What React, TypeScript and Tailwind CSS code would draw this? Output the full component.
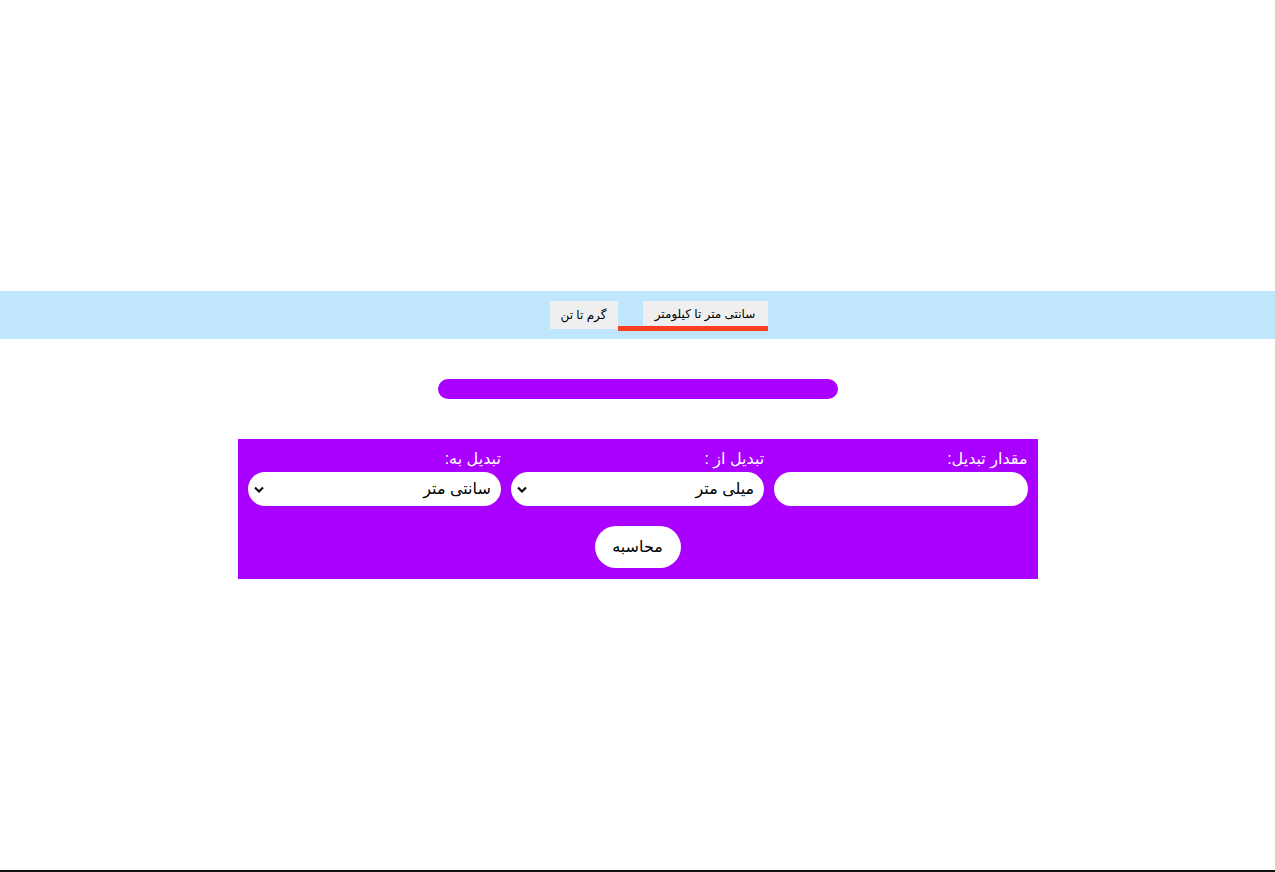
const font = { fontFamily: '"Liberation Sans", "DejaVu Sans", sans-serif' };

const Chevron = () => (
  <svg width="10" height="7" viewBox="0 0 10 7" className="shrink-0">
    <path d="M1 1.5 L5 5.5 L9 1.5" fill="none" stroke="#111" strokeWidth="2.2" />
  </svg>
);

const FakeSelect = ({ value }: { value: string }) => (
  <div className="flex h-[34px] items-center justify-between rounded-full bg-white pl-[6px] pr-[10px] text-[16px] text-black">
    <span>{value}</span>
    <Chevron />
  </div>
);

export default function App() {
  return (
    <div className="flex min-h-[872px] flex-col bg-white" style={font}>
      <div className="h-[291px]" />

      <nav className="flex h-[48px] items-start justify-center bg-[#bfe6fd] pt-[10px]" dir="rtl">
        <div className="flex border-b-[5px] border-[#ff3d1f] pl-[25px]">
          <button className="h-[25px] w-[125px] bg-[#efefef] text-[12px] text-black">سانتی متر تا کیلومتر</button>
        </div>
        <button className="ml-[42px] h-[28px] w-[68px] bg-[#efefef] text-[12px] text-black">گرم تا تن</button>
      </nav>

      <div className="mt-[40px] flex justify-center">
        <div className="h-[20px] w-[400px] rounded-full bg-[#aa00ff]" />
      </div>

      <div className="mt-[40px] flex justify-center">
        <form dir="rtl" className="w-[800px] bg-[#aa00ff] px-[10px] pb-[11px] pt-[10px]">
          <div className="grid grid-cols-3 gap-x-[10px]">
            <div>
              <label className="mb-[3px] block text-[16px] leading-[20px] text-white">مقدار تبدیل:</label>
              <div className="h-[34px] rounded-full bg-white" />
            </div>
            <div>
              <label className="mb-[3px] block text-[16px] leading-[20px] text-white">تبدیل از :</label>
              <FakeSelect value="میلی متر" />
            </div>
            <div>
              <label className="mb-[3px] block text-[16px] leading-[20px] text-white">تبدیل به:</label>
              <FakeSelect value="سانتی متر" />
            </div>
          </div>
          <div className="mt-[20px] flex justify-center">
            <button type="button" className="h-[42px] w-[86px] rounded-full bg-white text-[16px] text-black">محاسبه</button>
          </div>
        </form>
      </div>

      <div className="flex-1" />
      <div className="h-[2px] bg-[#111]" />
    </div>
  );
}
